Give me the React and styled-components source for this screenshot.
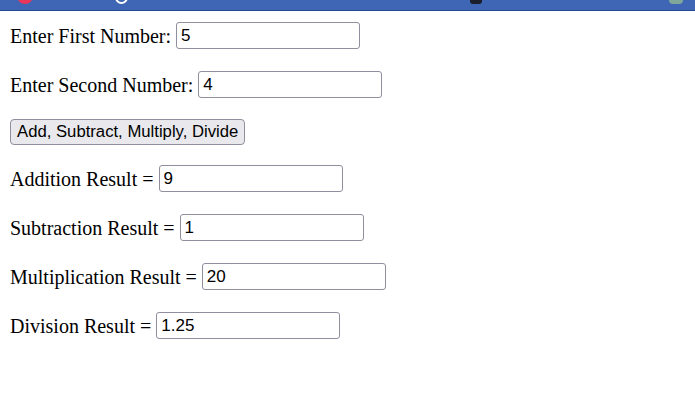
import React from 'react';
import styled, {createGlobalStyle} from 'styled-components';

const GlobalStyle = createGlobalStyle`
  html, body {
    margin: 0;
    padding: 0;
    background: #fff;
  }
  body {
    font-family: "Liberation Serif", "Times New Roman", serif;
    font-size: 20px;
    color: #000;
  }
`;

// the cropped bottom edge of the browser's tab strip
const TabStrip = styled.div`
  display: flex;
  align-items: flex-start;
  height: 10px;
  padding-left: 17px;
  background: #3e66b5;
  border-bottom: 1px solid #23498f;
  overflow: hidden;
`;

const Tab = styled.div`
  display: flex;
  align-items: flex-start;
  gap: 8px;
  flex: 0 0 ${p => p.width}px;
`;

const Favicon = styled.span`
  flex: none;
  width: ${p => p.size}px;
  height: ${p => p.size}px;
  margin-top: ${p => 4 - p.size}px;
  background: ${p => p.bg || 'transparent'};
  border: ${p => (p.ring ? '2px solid #fff' : 'none')};
  box-sizing: border-box;
  border-radius: ${p => p.radius || '50%'};
`;

const Page = styled.main`
  display: flex;
  flex-direction: column;
  gap: 22px;
  padding: 11px 10px;
`;

const Row = styled.div`
  display: flex;
  align-items: center;
  gap: 5px;
  height: 27px;
  margin: ${p => (p.tight ? '-2px 0' : '0')};
  white-space: nowrap;
`;

const Label = styled.label`
  line-height: 23px;
  padding-top: 1px;
`;

const Field = styled.input`
  box-sizing: border-box;
  width: 184px;
  height: 27px;
  padding: 1px 4px 0;
  border: 1px solid #8f8f9d;
  border-radius: 3px;
  background: #fff;
  font-family: "Liberation Sans", Arial, sans-serif;
  font-size: 17px;
  color: #000;
  outline: none;
`;

const Button = styled.button`
  box-sizing: border-box;
  height: 26px;
  padding: 0 6px;
  border: 1px solid #8f8f9d;
  border-radius: 4px;
  background: #e9e9ed;
  font-family: "Liberation Sans", Arial, sans-serif;
  font-size: 16.7px;
  color: #000;
`;

const inputs = [
  {id: 'first', label: 'Enter First Number:', value: '5'},
  {id: 'second', label: 'Enter Second Number:', value: '4'},
];

const results = [
  {id: 'add', label: 'Addition Result =', value: '9'},
  {id: 'sub', label: 'Subtraction Result =', value: '1'},
  {id: 'mul', label: 'Multiplication Result =', value: '20'},
  {id: 'div', label: 'Division Result =', value: '1.25'},
];

export default function App() {
  return (
    <>
      <GlobalStyle />
      <TabStrip>
        <Tab width={98}>
          <Favicon size={16} bg='#e8375a' />
        </Tab>
        <Tab width={355}>
          <Favicon size={13} ring />
        </Tab>
        <Tab width={199}>
          <Favicon size={12} bg='#1b1d2b' radius='3px' />
        </Tab>
        <Tab width={20}>
          <Favicon size={14} bg='#7fa89a' radius='4px' />
        </Tab>
      </TabStrip>
      <Page>
        {inputs.map(f => (
          <Row key={f.id}>
            <Label htmlFor={f.id}>{f.label}</Label>
            <Field id={f.id} type='text' defaultValue={f.value} />
          </Row>
        ))}
        <Row tight>
          <Button type='button'>Add, Subtract, Multiply, Divide</Button>
        </Row>
        {results.map(f => (
          <Row key={f.id}>
            <Label htmlFor={f.id}>{f.label}</Label>
            <Field id={f.id} type='text' readOnly defaultValue={f.value} />
          </Row>
        ))}
      </Page>
    </>
  );
}
